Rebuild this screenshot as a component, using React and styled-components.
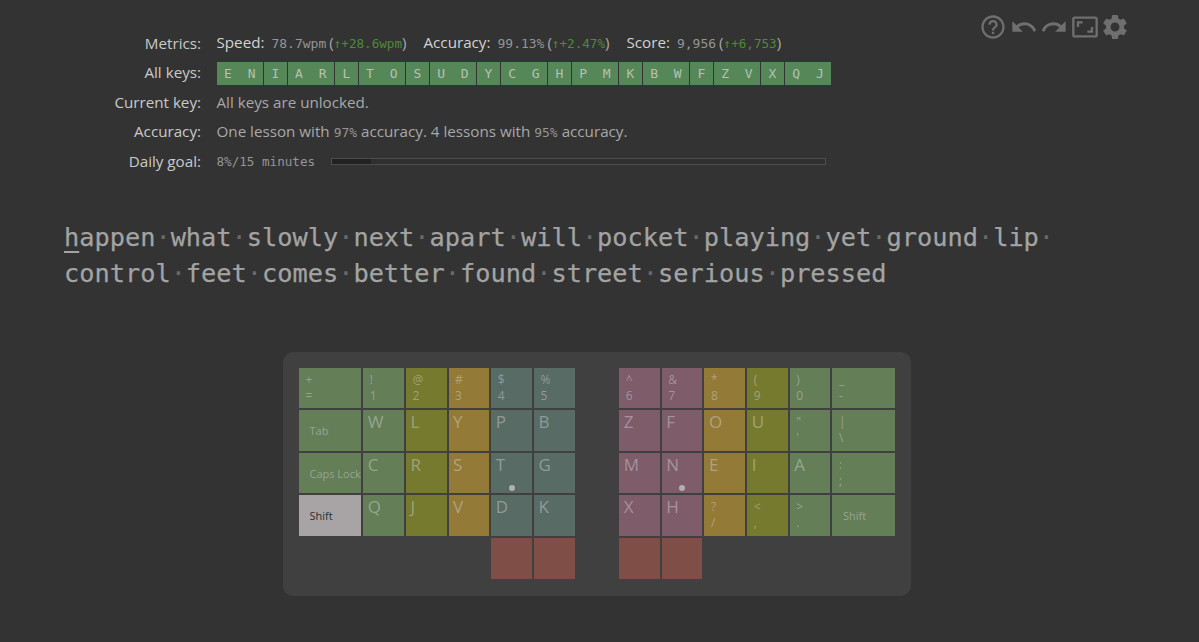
import React from "react";
import styled, { createGlobalStyle } from "styled-components";
import { MdHelpOutline, MdUndo, MdRedo, MdAspectRatio, MdSettings } from "react-icons/md";

const Global = createGlobalStyle`
  html, body { margin: 0; padding: 0; background: #333333; }
  body { font-family: "Open Sans", "Liberation Sans", sans-serif; }
`;

const MONO = `"DejaVu Sans Mono", "Liberation Mono", monospace`;

const Page = styled.div`
  width: 1199px;
  height: 642px;
  overflow: hidden;
  background: #333333;
  color: #b4b4b4;
  box-sizing: border-box;
  padding-top: 29px;
`;

const Top = styled.div`
  display: flex;
  justify-content: space-between;
  align-items: flex-start;
  padding-right: 70px;
`;

const Stats = styled.div`
  display: grid;
  grid-template-columns: 201px auto;
  column-gap: 15.5px;
  grid-auto-rows: 29.5px;
  align-items: center;
  font-size: 15.2px;
`;

const Label = styled.div`
  text-align: right;
  color: #cacaca;
  padding-bottom: 2px;
`;

const Line = styled.div`
  white-space: pre;
  padding-bottom: ${(p) => (p.$raised ? "3px" : "2px")};
  color: #a8a8a8;
`;

const MetricName = styled.span`
  color: #d2d2d2;
  margin: ${(p) => (p.$first ? "0 7px 0 0" : "0 7px 0 17px")};
`;

const Mono = styled.span`
  font-family: ${MONO};
  font-size: 13px;
  color: #959595;
`;

const Delta = styled.span`
  font-family: ${MONO};
  font-size: 12.6px;
  color: #4f8a36;
`;

const Paren = styled.span`
  color: #a8a8a8;
  margin: ${(p) => (p.$close ? "0" : "0 0 0 3px")};
`;

const KeyStrip = styled.div`
  display: flex;
  gap: 0.68px;
  width: 615px;
`;

const StripKey = styled.div`
  width: 23px;
  height: 23px;
  background: #568758;
  color: #b5c1b2;
  font-family: ${MONO};
  font-size: 13px;
  display: flex;
  align-items: center;
  justify-content: center;
`;

const Goal = styled.div`
  display: flex;
  align-items: center;
  gap: 15.5px;
`;

const GoalText = styled(Mono)`
  font-size: 12.6px;
`;

const GoalBar = styled.div`
  width: 495px;
  height: 7px;
  box-sizing: border-box;
  border: 1px solid #4c4c4c;
  background: #2f2f2f;
`;

const GoalFill = styled.div`
  height: 100%;
  background: #222222;
`;

const Toolbar = styled.div`
  display: flex;
  gap: 2.5px;
  margin-top: -16px;
  color: #6f6f6f;
  font-size: 28px;
  svg { display: block; }
`;

const Gear = styled(MdSettings)`
  transform: scale(1.07);
`;

const Lesson = styled.div`
  margin: 43px 0 0 64px;
  width: 1020px;
  font-family: ${MONO};
  font-size: 25.3px;
  line-height: 36.5px;
  color: #a3a3a3;
  -webkit-text-stroke: 0.25px #a3a3a3;
`;

const Hit = styled.span`
  text-decoration: underline;
  text-underline-offset: 5px;
  text-decoration-thickness: 2px;
`;

const Dot = styled.span`
  color: #6a6a6a;
  -webkit-text-stroke: 0;
`;

const Board = styled.div`
  margin: 59px 0 0 283px;
  width: 628px;
  height: 244px;
  box-sizing: border-box;
  padding: 16px;
  background: #404040;
  border-radius: 10px;
  display: flex;
  gap: 44.6px;
`;

const Half = styled.div`
  display: grid;
  grid-template-columns: ${(p) => p.$columns};
  grid-auto-rows: 40.67px;
  gap: 2px;
`;

const KEY_COLORS = {
  g: "#647e58",
  o: "#757a2e",
  y: "#937a36",
  s: "#596b65",
  p: "#7e5c69",
  r: "#7f4f47",
  w: "#a8a4a5",
};

const Key = styled.div`
  position: relative;
  box-sizing: border-box;
  background: ${(p) => KEY_COLORS[p.$c]};
  color: ${(p) => (p.$c === "w" ? "#2e2e2e" : "rgba(215,215,215,0.45)")};
  font-size: 12px;
  line-height: 16px;
  padding: 4px 0 0 6.5px;
  white-space: nowrap;
  overflow: hidden;
`;

const Letter = styled.div`
  font-size: 17px;
  line-height: 20px;
  margin: -2px 0 0 -2px;
`;

const WideLabel = styled.div`
  font-size: 11px;
  line-height: 14px;
  padding-top: 10px;
  margin-left: 4px;
`;

const Home = styled.span`
  position: absolute;
  left: 50%;
  bottom: 2.6px;
  width: 6px;
  height: 6px;
  margin-left: -3px;
  border-radius: 50%;
  background: #b0b0b0;
`;

const Blank = styled.div``;

const letters = "ENIARLTOSUDYCGHPMKBWFZVXQJ".split("");
const words1 = ["what", "slowly", "next", "apart", "will", "pocket", "playing", "yet", "ground", "lip"];
const words2 = ["feet", "comes", "better", "found", "street", "serious", "pressed"];

const K = ({ c, top, bottom, letter, wide, home }) => (
  <Key $c={c}>
    {top !== undefined && <div>{top}</div>}
    {bottom !== undefined && <div>{bottom}</div>}
    {letter && <Letter>{letter}</Letter>}
    {wide && <WideLabel>{wide}</WideLabel>}
    {home && <Home />}
  </Key>
);

export default function App() {
  return (
    <Page>
      <Global />
      <Top>
        <Stats>
          <Label>Metrics:</Label>
          <Line $raised>
            <MetricName $first>Speed:</MetricName>
            <Mono>78.7wpm</Mono>
            <Paren>(</Paren><Delta>↑+28.6wpm</Delta><Paren $close>)</Paren>
            <MetricName>Accuracy:</MetricName>
            <Mono>99.13%</Mono>
            <Paren>(</Paren><Delta>↑+2.47%</Delta><Paren $close>)</Paren>
            <MetricName>Score:</MetricName>
            <Mono>9,956</Mono>
            <Paren>(</Paren><Delta>↑+6,753</Delta><Paren $close>)</Paren>
          </Line>
          <Label>All keys:</Label>
          <KeyStrip>
            {letters.map((l) => <StripKey key={l}>{l}</StripKey>)}
          </KeyStrip>
          <Label>Current key:</Label>
          <Line>All keys are unlocked.</Line>
          <Label>Accuracy:</Label>
          <Line>One lesson with <Mono>97%</Mono> accuracy. 4 lessons with <Mono>95%</Mono> accuracy.</Line>
          <Label>Daily goal:</Label>
          <Goal>
            <GoalText>8%/15 minutes</GoalText>
            <GoalBar><GoalFill style={{ width: "8%" }} /></GoalBar>
          </Goal>
        </Stats>
        <Toolbar>
          <MdHelpOutline />
          <MdUndo />
          <MdRedo />
          <MdAspectRatio />
          <Gear />
        </Toolbar>
      </Top>
      <Lesson>
        <Hit>h</Hit>appen
        {words1.map((w) => <React.Fragment key={w}><Dot>·</Dot>{w}</React.Fragment>)}
        <Dot>·</Dot><br />
        control
        {words2.map((w) => <React.Fragment key={w}><Dot>·</Dot>{w}</React.Fragment>)}
      </Lesson>
      <Board>
        <Half $columns="62.3px repeat(5, 40.67px)">
          <K c="g" top="+" bottom="=" />
          <K c="g" top="!" bottom="1" />
          <K c="o" top="@" bottom="2" />
          <K c="y" top="#" bottom="3" />
          <K c="s" top="$" bottom="4" />
          <K c="s" top="%" bottom="5" />
          <K c="g" wide="Tab" />
          <K c="g" letter="W" />
          <K c="o" letter="L" />
          <K c="y" letter="Y" />
          <K c="s" letter="P" />
          <K c="s" letter="B" />
          <K c="g" wide="Caps Lock" />
          <K c="g" letter="C" />
          <K c="o" letter="R" />
          <K c="y" letter="S" />
          <K c="s" letter="T" home />
          <K c="s" letter="G" />
          <K c="w" wide="Shift" />
          <K c="g" letter="Q" />
          <K c="o" letter="J" />
          <K c="y" letter="V" />
          <K c="s" letter="D" />
          <K c="s" letter="K" />
          <Blank /><Blank /><Blank /><Blank />
          <K c="r" />
          <K c="r" />
        </Half>
        <Half $columns="repeat(5, 40.67px) 62.3px">
          <K c="p" top="^" bottom="6" />
          <K c="p" top="&" bottom="7" />
          <K c="y" top="*" bottom="8" />
          <K c="o" top="(" bottom="9" />
          <K c="g" top=")" bottom="0" />
          <K c="g" top="_" bottom="-" />
          <K c="p" letter="Z" />
          <K c="p" letter="F" />
          <K c="y" letter="O" />
          <K c="o" letter="U" />
          <K c="g" top={'"'} bottom="'" />
          <K c="g" top="|" bottom="\" />
          <K c="p" letter="M" />
          <K c="p" letter="N" home />
          <K c="y" letter="E" />
          <K c="o" letter="I" />
          <K c="g" letter="A" />
          <K c="g" top=":" bottom=";" />
          <K c="p" letter="X" />
          <K c="p" letter="H" />
          <K c="y" top="?" bottom="/" />
          <K c="o" top="<" bottom="," />
          <K c="g" top=">" bottom="." />
          <K c="g" wide="Shift" />
          <K c="r" />
          <K c="r" />
        </Half>
      </Board>
    </Page>
  );
}
